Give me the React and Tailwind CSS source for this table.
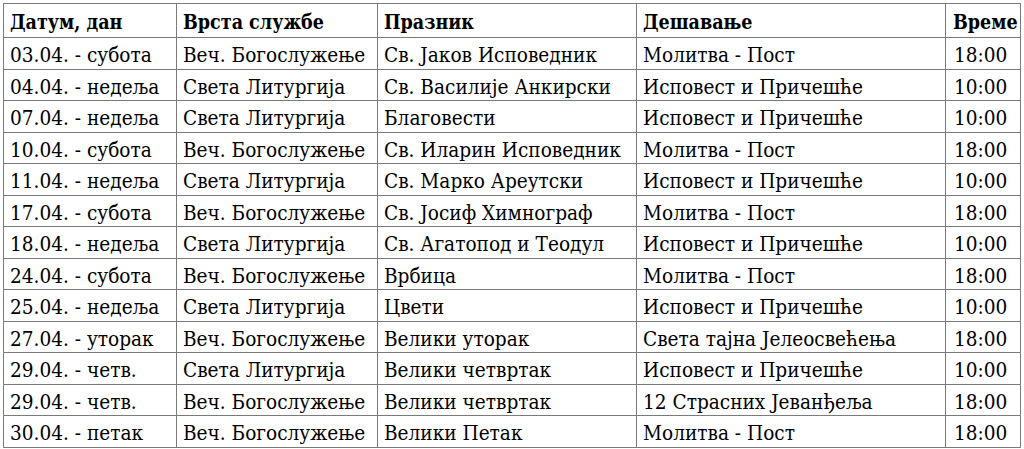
import React from "react";

const rows = [
  ["03.04. - субота", "Веч. Богослужење", "Св. Јаков Исповедник", "Молитва - Пост", "18:00"],
  ["04.04. - недеља", "Света Литургија", "Св. Василије Анкирски", "Исповест и Причешће", "10:00"],
  ["07.04. - недеља", "Света Литургија", "Благовести", "Исповест и Причешће", "10:00"],
  ["10.04. - субота", "Веч. Богослужење", "Св. Иларин Исповедник", "Молитва - Пост", "18:00"],
  ["11.04. - недеља", "Света Литургија", "Св. Марко Ареутски", "Исповест и Причешће", "10:00"],
  ["17.04. - субота", "Веч. Богослужење", "Св. Јосиф Химнограф", "Молитва - Пост", "18:00"],
  ["18.04. - недеља", "Света Литургија", "Св. Агатопод и Теодул", "Исповест и Причешће", "10:00"],
  ["24.04. - субота", "Веч. Богослужење", "Врбица", "Молитва - Пост", "18:00"],
  ["25.04. - недеља", "Света Литургија", "Цвети", "Исповест и Причешће", "10:00"],
  ["27.04. - уторак", "Веч. Богослужење", "Велики уторак", "Света тајна Јелеосвећења", "18:00"],
  ["29.04. - четв.", "Света Литургија", "Велики четвртак", "Исповест и Причешће", "10:00"],
  ["29.04. - четв.", "Веч. Богослужење", "Велики четвртак", "12 Страсних Јеванђеља", "18:00"],
  ["30.04. - петак", "Веч. Богослужење", "Велики Петак", "Молитва - Пост", "18:00"],
];

const headers = ["Датум, дан", "Врста службе", "Празник", "Дешавање", "Време"];
const widths = ["w-[173px]", "w-[201px]", "w-[259px]", "w-[309px]", "w-[75px]"];

export default function App() {
  return (
    <div className="w-[1024px] h-[449px] bg-white pt-[3px] pl-[3px] overflow-hidden">
      <table
        className="table-fixed border-collapse text-black w-[1017px]"
        style={{ fontFamily: '"DejaVu Serif Condensed", "DejaVu Serif", serif' }}
      >
        <colgroup>
          {widths.map((w, i) => (
            <col key={i} className={w} />
          ))}
        </colgroup>
        <thead>
          <tr className="h-[34px]">
            {headers.map((h, i) => (
              <th
                key={i}
                className={`border border-[#7a7a7a] text-left font-bold text-[19.5px] leading-none pr-0 pt-[5px] align-middle whitespace-nowrap ${i === 4 ? "pl-[7px]" : "pl-[6px]"}`}
              >
                {h}
              </th>
            ))}
          </tr>
        </thead>
        <tbody>
          {rows.map((r, ri) => (
            <tr key={ri} className="h-[31.5px]">
              {r.map((c, ci) => (
                <td
                  key={ci}
                  className={`border border-[#7a7a7a] text-[20.6px] leading-none pr-0 pt-[5px] align-middle whitespace-nowrap ${ci === 4 ? "pl-[8px]" : "pl-[6px]"}`}
                >
                  {c}
                </td>
              ))}
            </tr>
          ))}
        </tbody>
      </table>
    </div>
  );
}
